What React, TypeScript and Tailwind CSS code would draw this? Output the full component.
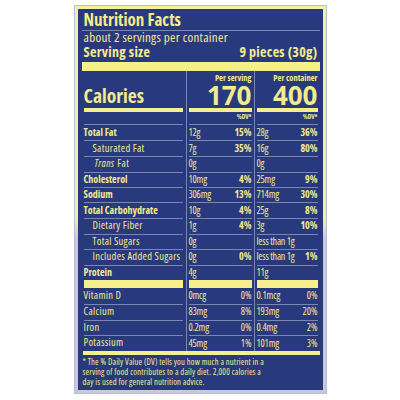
import clsx from "clsx";

type Nutrient = {
  label: string;
  bold?: boolean;
  indent?: boolean;
  italic?: string;
  v1: string;
  p1?: string;
  v2: string;
  p2?: string;
  pBold?: boolean;
  line?: boolean;
  h: string;
};

const main: Nutrient[] = [
  { label: "Total Fat", bold: true, v1: "12g", p1: "15%", v2: "28g", p2: "36%", pBold: true, line: true, h: "h-[15.5px]" },
  { label: "Saturated Fat", indent: true, v1: "7g", p1: "35%", v2: "16g", p2: "80%", pBold: true, line: true, h: "h-[15.5px]" },
  { label: "Fat", italic: "Trans", indent: true, v1: "0g", v2: "0g", line: true, h: "h-[15.5px]" },
  { label: "Cholesterol", bold: true, v1: "10mg", p1: "4%", v2: "25mg", p2: "9%", pBold: true, line: true, h: "h-[15.5px]" },
  { label: "Sodium", bold: true, v1: "306mg", p1: "13%", v2: "714mg", p2: "30%", pBold: true, line: true, h: "h-[15.5px]" },
  { label: "Total Carbohydrate", bold: true, v1: "10g", p1: "4%", v2: "25g", p2: "8%", pBold: true, line: true, h: "h-[15.5px]" },
  { label: "Dietary Fiber", indent: true, v1: "1g", p1: "4%", v2: "3g", p2: "10%", pBold: true, line: true, h: "h-[15.5px]" },
  { label: "Total Sugars", indent: true, v1: "0g", v2: "less than 1g", line: true, h: "h-[15.5px]" },
  { label: "Includes Added Sugars", indent: true, v1: "0g", p1: "0%", v2: "less than 1g", p2: "1%", pBold: true, line: true, h: "h-[15.5px]" },
  { label: "Protein", bold: true, v1: "4g", v2: "11g", line: false, h: "h-[15.5px]" },
];

const minerals: Nutrient[] = [
  { label: "Vitamin D", v1: "0mcg", p1: "0%", v2: "0.1mcg", p2: "0%", line: true, h: "h-[15.75px]" },
  { label: "Calcium", v1: "83mg", p1: "8%", v2: "193mg", p2: "20%", line: true, h: "h-[15.75px]" },
  { label: "Iron", v1: "0.2mg", p1: "0%", v2: "0.4mg", p2: "2%", line: true, h: "h-[15.75px]" },
  { label: "Potassium", v1: "45mg", p1: "1%", v2: "101mg", p2: "3%", line: false, h: "h-[15.75px]" },
];

const rule = "border-b border-[#7d86b0]";
const divider = "border-l border-[#7d86b0]";

function NutrientRow({ n }: { n: Nutrient }) {
  return (
    <div className={clsx("grid grid-cols-[104px_68px_66px] whitespace-nowrap text-[10px]", n.h)}>
      <div className="pl-[2px] pr-[3px]">
        <div
          className={clsx(
            "flex h-full items-center",
            n.line && rule,
            n.indent && "pl-[9px]",
            n.bold ? "font-bold" : "text-[10.5px] tracking-[0.3px]",
          )}
        >
          <span>
            {n.italic && <em className="mr-[3px] pl-[2px]">{n.italic}</em>}
            {n.label}
          </span>
        </div>
      </div>
      <div className={clsx(divider, "px-[2px]")}>
        <div className={clsx("flex h-full items-center justify-between", n.line && rule)}>
          <span className="tracking-[-0.2px]">{n.v1}</span>
          <span className={clsx(n.pBold && "font-bold")}>{n.p1}</span>
        </div>
      </div>
      <div className={clsx(divider, "px-[2px]")}>
        <div className={clsx("flex h-full items-center justify-between", n.line && rule)}>
          <span className="tracking-[-0.2px]">{n.v2}</span>
          <span className={clsx(n.pBold && "font-bold")}>{n.p2}</span>
        </div>
      </div>
    </div>
  );
}

function AmountColumn({ heading, amount }: { heading: string; amount: string }) {
  return (
    <div className={clsx(divider, "px-[2px]")}>
      <div className={clsx("flex h-full flex-col items-end pt-[2px]", rule)}>
        <span className="text-[8.5px] font-bold leading-[9px]">{heading}</span>
        <span className="text-[26px] font-bold leading-[26px] [font-stretch:92%]">{amount}</span>
        <div className="h-[4px] w-full bg-[#f7ee8e]" />
        <span className="mt-[1px] text-[6.5px] font-bold leading-[8px]">%DV*</span>
      </div>
    </div>
  );
}

export default function App() {
  return (
    <div className="flex min-h-[400px] justify-center bg-white pt-[5px]">
      <div className="h-[389px] w-[253px] border border-[#b9bdd2] bg-[linear-gradient(to_bottom,#f7ef9f_0%,#f7ef9f_55%,#c6c9de_60%,#c6c9de_100%)] p-[3px]">
        <div className="flex h-full flex-col bg-[#283a7d] pl-[4px] pr-[3px] font-['Open_Sans',sans-serif] text-[#f4eb8c] [font-stretch:80%]">
          <div className={clsx("pl-[2px] pt-[1px] text-[17px] font-bold leading-[20px]", rule)}>Nutrition Facts</div>
          <div className="pl-[2px] text-[13px] leading-[13px] tracking-[0.3px]">about 2 servings per container</div>
          <div className="flex justify-between pl-[2px] pr-[2px] text-[14px] font-bold leading-[16px] tracking-[0.3px]">
            <span>Serving size</span>
            <span>9 pieces (30g)</span>
          </div>
          <div className="mt-[2px] h-[9px] bg-[#f7ee8e]" />

          <div className="grid h-[54px] grid-cols-[104px_68px_66px]">
            <div className="pl-[2px] pr-[3px]">
              <div className={clsx("flex h-full flex-col", rule)}>
                <span className="mt-auto text-[19.5px] font-bold leading-[24px]">Calories</span>
                <div className="mb-[12px] h-[4px] bg-[#f7ee8e]" />
              </div>
            </div>
            <AmountColumn heading="Per serving" amount="170" />
            <AmountColumn heading="Per container" amount="400" />
          </div>

          {main.map((n) => (
            <NutrientRow key={n.label} n={n} />
          ))}

          <div className="grid h-[8px] grid-cols-[104px_68px_66px]">
            <div className="pl-[2px] pr-[3px]">
              <div className="h-full bg-[#f7ee8e]" />
            </div>
            <div className={clsx(divider, "px-[2px]")}>
              <div className="h-full bg-[#f7ee8e]" />
            </div>
            <div className={clsx(divider, "px-[2px]")}>
              <div className="h-full bg-[#f7ee8e]" />
            </div>
          </div>

          {minerals.map((n) => (
            <NutrientRow key={n.label} n={n} />
          ))}

          <div className="ml-[1px] h-[4px] bg-[#f7ee8e]" />
          <p className="pl-[1px] pt-[2px] text-[8.5px] leading-[10px] tracking-[0.17px]">
            <span className="block">* The % Daily Value (DV) tells you how much a nutrient in a</span>
            <span className="block">serving of food contributes to a daily diet. 2,000 calories a</span>
            <span className="block">day is used for general nutrition advice.</span>
          </p>
        </div>
      </div>
    </div>
  );
}
